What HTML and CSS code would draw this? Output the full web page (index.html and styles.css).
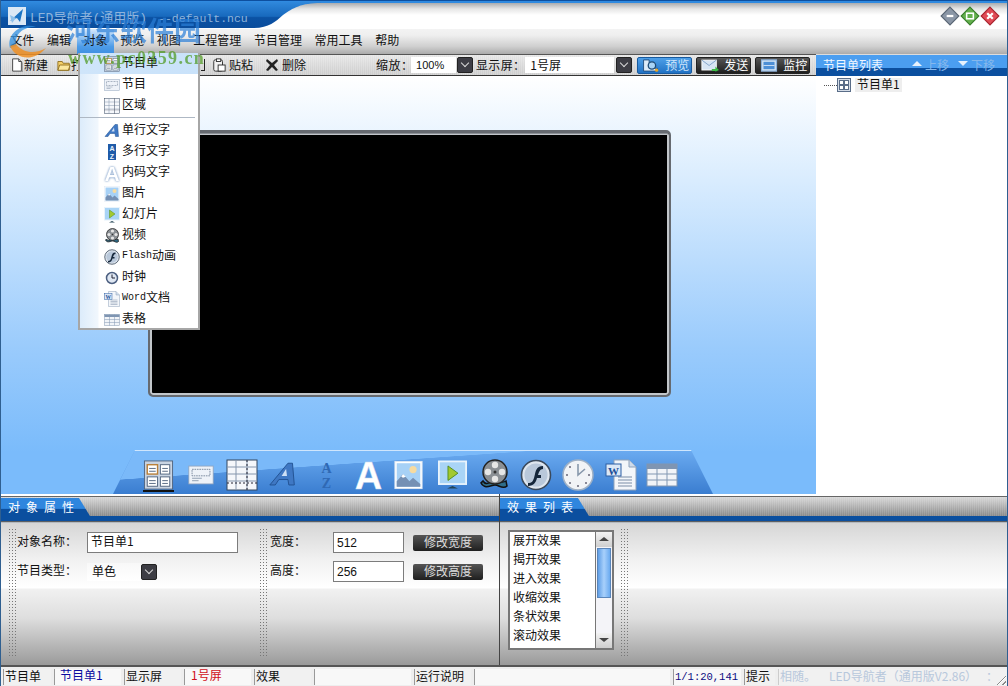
FILE: index.html
```html
<!DOCTYPE html>
<html lang="zh">
<head>
<meta charset="utf-8">
<title>LED导航者</title>
<link rel="stylesheet" href="styles.css">
</head>
<body>
<svg class="defs" width="0" height="0">
  <defs>
    <symbol id="i-grid" viewBox="0 0 32 32"><rect x="1" y="1" width="30" height="30" fill="#c9d4e2" stroke="#52657f"/><rect x="4" y="5" width="11" height="10" fill="#fff" stroke="#b9803a" stroke-width="1.5"/><rect x="18" y="5" width="10" height="10" fill="#fff" stroke="#52657f"/><rect x="4" y="18" width="11" height="10" fill="#fff" stroke="#52657f"/><rect x="18" y="18" width="10" height="10" fill="#fff" stroke="#52657f"/><path d="M6 9h7M6 12h7M20 9h6M20 12h6M6 22h7M6 25h7M20 22h6M20 25h6" stroke="#52657f"/></symbol>
    <symbol id="i-grid-s" viewBox="0 0 14 14"><rect x=".5" y=".5" width="13" height="13" fill="#d5dde8" stroke="#5a6d88"/><rect x="2.5" y="2.5" width="4" height="4" fill="#fff" stroke="#5a6d88"/><rect x="7.5" y="2.5" width="4" height="4" fill="#fff" stroke="#5a6d88"/><rect x="2.5" y="7.5" width="4" height="4" fill="#fff" stroke="#5a6d88"/><rect x="7.5" y="7.5" width="4" height="4" fill="#fff" stroke="#5a6d88"/></symbol>
    <symbol id="i-prog" viewBox="0 0 32 26"><rect x="1" y="2" width="30" height="22" fill="#eef2f8" stroke="#8ea2bc"/><rect x="5" y="6" width="22" height="8" fill="none" stroke="#66778f" stroke-dasharray="2 1"/><path d="M5 17h12M5 20h8" stroke="#8090a6"/></symbol>
    <symbol id="i-area" viewBox="0 0 32 32"><rect x="1" y="1" width="30" height="30" fill="#f5f7fb" stroke="#33465f"/><path d="M1 8h30M1 15h30M1 22h30M10 1v30M21 1v30" stroke="#8596ad"/><path d="M1 24h30M21 1v30" stroke="#223" stroke-dasharray="2 2"/></symbol>
    <symbol id="i-aslant" viewBox="0 0 32 32"><path d="M2 27L22 3h5l2 24h-6l-1-6H12l-4 6z" fill="#3f78c4" stroke="#20508f"/><path d="M15 17h6l-1-8z" fill="#cfe0f5"/></symbol>
    <symbol id="i-az" viewBox="0 0 18 32"><text x="9" y="14" text-anchor="middle" class="sym-az">A</text><text x="9" y="30" text-anchor="middle" class="sym-az">Z</text></symbol>
    <symbol id="i-az-s" viewBox="0 0 16 16"><rect x="4" y="0" width="8" height="16" fill="#1f5ba8"/><text x="8" y="7" text-anchor="middle" class="sym-azs">A</text><text x="8" y="15" text-anchor="middle" class="sym-azs">Z</text></symbol>
    <symbol id="i-a" viewBox="0 0 32 32"><text x="16" y="31" text-anchor="middle" class="sym-a">A</text></symbol>
    <symbol id="i-pic" viewBox="0 0 32 32"><rect x="1" y="1" width="30" height="30" fill="#fff" stroke="#dfe8f3"/><rect x="3" y="3" width="26" height="26" fill="#a7d1f6"/><circle cx="21" cy="10" r="4" fill="#f7dba0"/><path d="M3 29V23l7-8 7 8 4-4 8 7v3z" fill="#7590b4"/><path d="M10 15l3 3-3 1-2-1z" fill="#fff"/></symbol>
    <symbol id="i-play" viewBox="0 0 32 32"><rect x="1" y="1" width="30" height="25" fill="#a9d4f6" stroke="#e8f3fc" stroke-width="2"/><path d="M11 6l11 8-11 8z" fill="#a3c92f" stroke="#4e8a1d"/><path d="M10 31h12l-6-3z" fill="#245"/></symbol>
    <symbol id="i-film" viewBox="0 0 32 32"><path d="M3 24c4 7 10 2 14 2s8 5 12 1l-1-5c-4 3-8-1-12 0s-8 5-11 0z" fill="#2f6d8a" stroke="#111" stroke-width="1.5"/><circle cx="17" cy="13" r="12" fill="#8a8f94" stroke="#222" stroke-width="1.5"/><circle cx="17" cy="6" r="3.2" fill="#e6e6e6"/><circle cx="10" cy="13" r="3.2" fill="#e6e6e6"/><circle cx="24" cy="13" r="3.2" fill="#e6e6e6"/><circle cx="17" cy="20" r="3.2" fill="#e6e6e6"/><circle cx="17" cy="13" r="1.5" fill="#333"/></symbol>
    <symbol id="i-flash" viewBox="0 0 32 32"><circle cx="16" cy="16" r="14.5" fill="#dfe6ee" stroke="#3b4a5c" stroke-width="1.6"/><circle cx="16" cy="16" r="11.5" fill="#b9c8da"/><path d="M23 7c-6 0-7 4-8 8l-1 4c-1 3-2 5-6 5v3c6 0 8-4 9-8h4v-3h-3c1-3 2-6 5-6z" fill="#15263a"/></symbol>
    <symbol id="i-clock" viewBox="0 0 32 32"><circle cx="16" cy="16" r="15" fill="#f1f3f6" stroke="#9fb1c6" stroke-width="1.5"/><path d="M16 5v11l7-6" fill="none" stroke="#8898ac" stroke-width="1.6"/><circle cx="16" cy="27" r="1" fill="#667"/><circle cx="5" cy="16" r="1" fill="#667"/><circle cx="27" cy="16" r="1" fill="#667"/><circle cx="8" cy="8" r="1" fill="#667"/><circle cx="8" cy="24" r="1" fill="#667"/><circle cx="24" cy="24" r="1" fill="#667"/></symbol>
    <symbol id="i-clock-s" viewBox="0 0 16 16"><circle cx="8" cy="8" r="5.5" fill="#dfe7f2" stroke="#4c5f80" stroke-width="1.5"/><path d="M8 4.5V8h3" fill="none" stroke="#223"/></symbol>
    <symbol id="i-word" viewBox="0 0 32 32"><path d="M9 1h15l7 7v23H9z" fill="#f3f6fa" stroke="#8fa2ba"/><path d="M24 1v7h7" fill="#cfdbea" stroke="#8fa2ba"/><path d="M13 18h14M13 21h14M13 24h14M13 27h14" stroke="#7a8da6"/><rect x="1" y="5" width="15" height="12" fill="#dce8f6" stroke="#2c5ea3"/><text x="8.5" y="15.5" text-anchor="middle" class="sym-w">W</text></symbol>
    <symbol id="i-table" viewBox="0 0 32 24"><rect x="1" y="1" width="30" height="22" fill="#f1f4f8" stroke="#8197b2"/><rect x="1" y="1" width="30" height="5" fill="#7f95b2"/><path d="M1 11h30M1 17h30M11 1v22M21 1v22" stroke="#8197b2"/></symbol>
    <symbol id="i-doc" viewBox="0 0 14 16"><path d="M2 1h7l3 3v11H2z" fill="#fff" stroke="#333"/><path d="M9 1v3h3" fill="#ddd" stroke="#333"/><path d="M13 5v11H4" fill="none" stroke="#888"/></symbol>
    <symbol id="i-folder" viewBox="0 0 16 14"><path d="M1 3h5l1 2h7v8H1z" fill="#f5cf68" stroke="#8b6a1d"/><path d="M3 7h12l-2 6H1z" fill="#fbe79e" stroke="#8b6a1d"/></symbol>
    <symbol id="i-paste" viewBox="0 0 16 16"><rect x="2" y="2" width="10" height="13" rx="2" fill="#f2f2f2" stroke="#222"/><rect x="5" y="1" width="5" height="3" fill="#fff" stroke="#222"/><rect x="7" y="8" width="8" height="7" fill="#fff" stroke="#222"/></symbol>
    <symbol id="i-x" viewBox="0 0 14 14"><path d="M2 1l5 4 5-4 1 2-4 4 4 5-2 1-4-4-4 4-2-1 4-5-4-4z" fill="#222"/></symbol>
    <symbol id="i-preview" viewBox="0 0 18 14"><path d="M1 1h6v9h9v3H1z" fill="#dcebf9" stroke="#23507f"/><circle cx="10" cy="7" r="4" fill="#a8d3f5" stroke="#1f4b76" stroke-width="1.4"/><circle cx="15" cy="12" r="1.8" fill="#eaa82b"/></symbol>
    <symbol id="i-mail" viewBox="0 0 20 14"><rect x="1" y="1" width="16" height="11" fill="#d7e5f5" stroke="#fff"/><path d="M1 1l8 6 8-6" fill="none" stroke="#7ea0c8"/><path d="M12 11h4V8l4 4-4 2v-1h-4z" fill="#3dbb46"/></symbol>
    <symbol id="i-monitor" viewBox="0 0 18 14"><rect x="1" y="1" width="16" height="12" fill="#dce9f7" stroke="#8eb2da" stroke-width="1.4"/><rect x="3" y="3" width="12" height="8" fill="#4d8fd6"/><path d="M3 7h12" stroke="#cfe1f5"/></symbol>
  </defs>
</svg>

<div class="window">
  <header class="titlebar">
    <svg class="title-shape" width="320" height="29" viewBox="0 0 320 29" preserveAspectRatio="none">
      <defs>
        <linearGradient id="tabfill" x1="0" y1="0" x2="0" y2="1"><stop offset="0" stop-color="#2f88dc"/><stop offset=".55" stop-color="#1869bd"/><stop offset=".6" stop-color="#0b52a4"/><stop offset="1" stop-color="#0a4d9c"/></linearGradient>
      </defs>
      <path d="M0 2H320V3C300 3 292 8 282 15 274 22 268 28 252 28H0z" fill="url(#tabfill)"/>
    </svg>
    <span class="app-logo"><svg width="18" height="18" viewBox="0 0 18 18"><rect width="18" height="18" fill="#dbe8f5"/><path d="M2 14L15 2l-3 13-3-4z" fill="#1c74c4"/><path d="M2 8l6 3-4 5z" fill="#8ec0ea"/></svg></span>
    <span class="title-text">LED导航者(通用版)<span class="title-file">--default.ncu</span></span>
    <div class="win-controls">
      <svg class="win-btn" viewBox="0 0 18 18"><path d="M9 1l8 8-8 8-8-8z" fill="#8a96a6" stroke="#5a6675"/><path d="M6 9h6" stroke="#fff" stroke-width="2"/></svg>
      <svg class="win-btn" viewBox="0 0 18 18"><path d="M9 1l8 8-8 8-8-8z" fill="#64b04e" stroke="#3a7f2c"/><rect x="6" y="6.5" width="6" height="5" fill="none" stroke="#fff" stroke-width="1.4"/></svg>
      <svg class="win-btn" viewBox="0 0 18 18"><path d="M9 1l8 8-8 8-8-8z" fill="#e04a55" stroke="#a82530"/><path d="M6.5 6.5l5 5M11.5 6.5l-5 5" stroke="#fff" stroke-width="2"/></svg>
    </div>
  </header>

  <nav class="menubar">
    <span class="menu-item">文件</span>
    <span class="menu-item">编辑</span>
    <span class="menu-item active">对象</span>
    <span class="menu-item">预览</span>
    <span class="menu-item">视图</span>
    <span class="menu-item">工程管理</span>
    <span class="menu-item">节目管理</span>
    <span class="menu-item">常用工具</span>
    <span class="menu-item">帮助</span>
  </nav>

  <div class="toolrow">
    <div class="toolbar">
      <div class="tool-hidden">
        <span class="tool"><svg class="ico14"><use href="#i-doc"/></svg>新建</span>
        <span class="tool"><svg class="ico14"><use href="#i-folder"/></svg>打开</span>
        <span class="tool-tail"></span>
      </div>
      <span class="tool wide"><svg class="ico14"><use href="#i-paste"/></svg>贴粘</span>
      <span class="tool wide"><svg class="ico14"><use href="#i-x"/></svg>删除</span>
      <span class="tool-label zoom-label">缩放：</span>
      <span class="fake-input w-zoom">100%</span>
      <span class="arrow-btn"></span>
      <span class="tool-label">显示屏：</span>
      <span class="fake-input w-screen">1号屏</span>
      <span class="arrow-btn"></span>
      <span class="act-btn first"><svg class="ico-btn"><use href="#i-preview"/></svg>预览</span>
      <span class="act-btn dark"><svg class="ico-btn"><use href="#i-mail"/></svg>发送</span>
      <span class="act-btn dark"><svg class="ico-btn"><use href="#i-monitor"/></svg>监控</span>
    </div>
    <div class="list-head">
      <span class="list-title">节目单列表</span>
      <span class="list-act up">上移</span>
      <span class="list-act down">下移</span>
    </div>
  </div>

  <main class="workspace">
    <section class="stage">
      <div class="screen"></div>
      <div class="dock">
        <svg class="dock-i sel"><use href="#i-grid"/></svg>
        <svg class="dock-i w26"><use href="#i-prog"/></svg>
        <svg class="dock-i w32"><use href="#i-area"/></svg>
        <svg class="dock-i"><use href="#i-aslant"/></svg>
        <svg class="dock-i w18"><use href="#i-az"/></svg>
        <svg class="dock-i"><use href="#i-a"/></svg>
        <svg class="dock-i"><use href="#i-pic"/></svg>
        <svg class="dock-i"><use href="#i-play"/></svg>
        <svg class="dock-i w32"><use href="#i-film"/></svg>
        <svg class="dock-i w32"><use href="#i-flash"/></svg>
        <svg class="dock-i w32"><use href="#i-clock"/></svg>
        <svg class="dock-i w32"><use href="#i-word"/></svg>
        <svg class="dock-i w32"><use href="#i-table"/></svg>
      </div>
    </section>
    <aside class="tree">
      <div class="tree-row">
        <span class="tree-dots"></span>
        <svg class="ico14"><use href="#i-grid-s"/></svg>
        <span class="tree-label">节目单1</span>
      </div>
    </aside>
  </main>

  <section class="panels">
    <div class="panel left">
      <div class="panel-head"><span class="panel-tab">对象属性</span></div>
      <div class="panel-body form-body">
        <span class="grip"></span>
        <div class="form-col name-col">
          <div class="form-row"><span class="form-label">对象名称：</span><span class="field name-field">节目单1</span></div>
          <div class="form-row"><span class="form-label">节目类型：</span><span class="plain-select">单色</span><span class="arrow-btn"></span></div>
        </div>
        <span class="grip"></span>
        <div class="form-col size-col">
          <div class="form-row"><span class="form-label short">宽度：</span><span class="field num-field">512</span><span class="dark-btn">修改宽度</span></div>
          <div class="form-row"><span class="form-label short">高度：</span><span class="field num-field">256</span><span class="dark-btn">修改高度</span></div>
        </div>
      </div>
    </div>
    <div class="panel right">
      <div class="panel-head"><span class="panel-tab">效果列表</span></div>
      <div class="panel-body effect-body">
        <div class="listbox">
          <ul class="list-items">
            <li>展开效果</li><li>揭开效果</li><li>进入效果</li><li>收缩效果</li><li>条状效果</li><li>滚动效果</li><li>特殊效果</li>
          </ul>
          <div class="scroll">
            <span class="scroll-btn up"></span>
            <span class="scroll-thumb"></span>
            <span class="scroll-btn down"></span>
          </div>
        </div>
        <span class="grip"></span>
      </div>
    </div>
  </section>

  <footer class="status">
    <span class="cell">节目单</span>
    <span class="cell val blue">节目单1</span>
    <span class="cell">显示屏</span>
    <span class="cell val red">1号屏</span>
    <span class="cell">效果</span>
    <span class="cell val"></span>
    <span class="cell">运行说明</span>
    <span class="cell val"></span>
    <span class="cell val coord">1/1:20,141</span>
    <span class="cell">提示</span>
    <span class="cell marquee"><span class="mq-a">相随。</span><span class="mq-b">LED导航者（通用版V2.86）</span><span class="mq-c">：</span></span>
    <span class="resize-grip"></span>
  </footer>

  <div class="dropdown">
    <div class="dd-item hot"><svg class="dd-ico"><use href="#i-grid"/></svg>节目单</div>
    <div class="dd-item"><svg class="dd-ico"><use href="#i-prog"/></svg>节目</div>
    <div class="dd-item"><svg class="dd-ico"><use href="#i-area"/></svg>区域</div>
    <div class="dd-sep"></div>
    <div class="dd-item"><svg class="dd-ico"><use href="#i-aslant"/></svg>单行文字</div>
    <div class="dd-item"><svg class="dd-ico"><use href="#i-az-s"/></svg>多行文字</div>
    <div class="dd-item"><svg class="dd-ico pale"><use href="#i-a"/></svg>内码文字</div>
    <div class="dd-item"><svg class="dd-ico"><use href="#i-pic"/></svg>图片</div>
    <div class="dd-item"><svg class="dd-ico"><use href="#i-play"/></svg>幻灯片</div>
    <div class="dd-item"><svg class="dd-ico"><use href="#i-film"/></svg>视频</div>
    <div class="dd-item"><svg class="dd-ico"><use href="#i-flash"/></svg><span class="latin">Flash</span>动画</div>
    <div class="dd-item"><svg class="dd-ico"><use href="#i-clock-s"/></svg>时钟</div>
    <div class="dd-item"><svg class="dd-ico"><use href="#i-word"/></svg><span class="latin">Word</span>文档</div>
    <div class="dd-item"><svg class="dd-ico"><use href="#i-table"/></svg>表格</div>
  </div>

  <div class="watermark">
    <svg class="wm-logo" width="48" height="40" viewBox="0 0 48 40"><path d="M6 26C2 12 18 0 32 5 20 4 10 12 12 24z" fill="#2f8fe0" opacity=".75"/><path d="M6 24c6 14 24 16 36 2-10 6-22 6-30-4z" fill="#ef8f25" opacity=".85"/></svg>
    <span class="wm-cn">河东软件园</span>
    <span class="wm-url">www.pc0359.cn</span>
  </div>
</div>
</body>
</html>
```
FILE: styles.css
```css
* { box-sizing: border-box; }
html, body { margin: 0; padding: 0; }
body {
  width: 1008px;
  height: 686px;
  overflow: hidden;
  font: 12px/1 "Noto Sans CJK SC", "Liberation Sans", sans-serif;
  color: #111;
}
.defs { position: absolute; }
.sym-az { font: bold 15px "Liberation Serif", serif; fill: #2f69b4; }
.sym-azs { font: bold 7px "Liberation Sans", sans-serif; fill: #e8f2fc; }
.sym-a { font: bold 42px "Liberation Sans", sans-serif; fill: #fff; stroke: #c8d8ee; stroke-width: .4px; }
.sym-w { font: bold 11px "Liberation Serif", serif; fill: #1d4f98; }

.window {
  position: relative;
  width: 1008px;
  height: 686px;
  display: flex;
  flex-direction: column;
  background: #fff;
  border-left: 1px solid #2f5f90;
  border-right: 1px solid #2f5f90;
  overflow: hidden;
}

/* title */
.titlebar {
  position: relative;
  height: 29px;
  flex: none;
  display: flex;
  align-items: center;
  padding: 3px 7px 0 7px;
  background: linear-gradient(#0d4f9f 0, #0d4f9f 1px, #2f8ae0 1px, #2f8ae0 3px, #a9abae 3px, #e6e6e6 9px, #fff 15px);
}
.title-shape { position: absolute; left: 0; top: 0; }
.app-logo { position: relative; width: 18px; height: 18px; margin-right: 4px; }
.title-text {
  position: relative;
  font: 13px "Liberation Mono", "Noto Sans CJK SC", monospace;
  color: #8fb4dc;
  white-space: nowrap;
}
.title-file { margin-left: 11px; font-size: 11.5px; }
.win-controls { margin-left: auto; display: flex; position: relative; }
.win-btn { width: 20px; height: 20px; }

/* menu */
.menubar {
  height: 25px;
  flex: none;
  display: flex;
  align-items: stretch;
  padding-left: 3px;
  background: linear-gradient(#f3f3f3 0, #efefef 25%, #cfcfcf 70%, #ababab 100%);
}
.menu-item { display: flex; align-items: center; padding: 0 6.3px 3px; white-space: nowrap; color: #111; }
.menu-item.active { background: linear-gradient(#d8e9fb, #4d9ce8 70%, #3e8fe0); }

/* toolbar row */
.toolrow { height: 22px; flex: none; display: flex; }
.toolbar {
  width: 815px;
  display: flex;
  align-items: center;
  padding-left: 9px;
  border-top: 1px solid #555;
  border-bottom: 1px solid #333;
  background:
    repeating-linear-gradient(90deg, rgba(255,255,255,.18) 0 1px, transparent 1px 2px),
    linear-gradient(#e6e6e6, #cdcdcd);
}
.tool-hidden { width: 202px; display: flex; align-items: center; }
.tool { display: flex; align-items: center; margin-right: 9px; white-space: nowrap; }
.tool.wide { gap: 3px; margin-right: 12px; }
.tool-tail {
  width: 4px;
  height: 12px;
  margin-left: auto;
  margin-right: 7px;
  border-right: 1px solid #222;
  border-bottom: 1px solid #222;
}
.ico14 { width: 14px; height: 14px; flex: none; }
.tool-label { white-space: nowrap; letter-spacing: .3px; }
.zoom-label { margin-left: 58px; width: 35px; letter-spacing: .5px; }
.fake-input {
  height: 16px;
  display: flex;
  align-items: center;
  padding-left: 5px;
  background: #fff;
  font-size: 11px;
}
.w-zoom { width: 45px; margin-right: 1px; font-family: "Liberation Sans", sans-serif; }
.w-screen { width: 89px; margin-right: 2px; font-size: 12px; }
.arrow-btn {
  position: relative;
  width: 16px;
  height: 16px;
  flex: none;
  border-radius: 2px;
  background: #3d3d44;
  border: 1px solid #222;
  margin-right: 3px;
}
.arrow-btn::after {
  content: "";
  position: absolute;
  left: 4px;
  top: 2px;
  width: 5px;
  height: 5px;
  border-right: 1.5px solid #d8d8d8;
  border-bottom: 1.5px solid #d8d8d8;
  transform: rotate(45deg);
}
.act-btn {
  height: 17px;
  display: flex;
  align-items: center;
  gap: 5px;
  padding: 0 4px;
  margin-left: 4px;
  border-radius: 2px;
  color: #fff;
  white-space: nowrap;
}
.act-btn.first { width: 55px; margin-left: 2px; color: #cfe6fb; background: linear-gradient(#4d9fe8, #2272c4); border: 1px solid #185a9e; }
.act-btn.dark { width: 55px; background: linear-gradient(#555, #1f1f1f); border: 1px solid #222; }
.ico-btn { width: 18px; height: 13px; flex: none; }

.list-head {
  flex: 1;
  display: flex;
  align-items: center;
  padding-left: 7px;
  color: #f0f6ff;
  background: linear-gradient(#dcdcdc 0, #dcdcdc 1px, #4b9ef0 1px, #4b9ef0 14px, #0b4f9f 14px, #0b4f9f 100%);
}
.list-title { width: 89px; }
.list-act { position: relative; color: #86b8ec; padding-left: 13px; width: 46px; }
.list-act::before {
  content: "";
  position: absolute;
  left: 0;
  top: 2px;
  border-left: 5px solid transparent;
  border-right: 5px solid transparent;
}
.list-act.up::before { border-bottom: 5px solid #e8f2fc; }
.list-act.down::before { border-top: 5px solid #e8f2fc; }

/* workspace */
.workspace { height: 418px; flex: none; display: flex; }
.stage {
  width: 815px;
  display: flex;
  flex-direction: column;
  padding-top: 54px;
  background: linear-gradient(#fff 0, #d9ecfe 25%, #9acbfc 65%, #7abbfb 90%, #7abbfb 100%);
}
.screen {
  width: 523px;
  height: 267px;
  flex: none;
  margin-left: 147px;
  background: #000;
  border-style: solid;
  border-color: #666a70;
  border-width: 3px 2px 2px;
  border-radius: 5px;
  box-shadow: inset 0 1px 0 #8c9096, inset 0 0 0 2px #c2c6ca;
}
.dock {
  width: 600px;
  height: 44px;
  margin: auto 0 0 112px;
  padding: 4px 0 0 30px;
  display: grid;
  grid-template-columns: 45px 38px 42px 50px 36px 40px 44px 40px 42px 42px 43px 41px 31px;
  align-items: center;
  justify-items: start;
  clip-path: polygon(22px 0, 578px 0, 600px 100%, 0 100%);
  border-top: 1px solid #cfe6fd;
  background:
    linear-gradient(176deg, #7ab9f9 0, #7ab9f9 34%, transparent 34.6%),
    linear-gradient(#6aaaf0, #3a7dd0);
}
.dock-i { width: 29px; height: 30px; }
.dock-i.sel { width: 31px; height: 30px; box-shadow: 0 2px 0 #111; }
.dock-i.w26 { width: 26px; height: 22px; }
.dock-i.w32 { width: 32px; height: 32px; }
.dock-i.w18 { width: 17px; height: 30px; }

.tree { flex: 1; padding: 1px 0 0 8px; background: #fff; }
.tree-row { display: flex; align-items: center; height: 16px; }
.tree-dots { width: 13px; border-top: 1px dotted #555; }
.tree-label { margin-left: 4px; padding: 0 2px 2px; background: #eee; }

/* panels */
.panels { height: 171px; flex: none; display: flex; background: #fff; }
.panel { display: flex; flex-direction: column; }
.panel.left { width: 499px; border-right: 1px solid #444; }
.panel.right { flex: 1; }
.panel-head {
  height: 29px;
  flex: none;
  padding-top: 4px;
  display: flex;
  background:
    linear-gradient(#fff 0, #fff 2px, #666 2px, #666 3px, transparent 3px),
    linear-gradient(transparent 0, transparent 22px, #0b4f9f 22px, #0b4f9f 27px, #333 27px, #dfe6ee 29px),
    repeating-linear-gradient(90deg, rgba(255,255,255,.12) 0 1px, transparent 1px 2px),
    linear-gradient(#d8d8d8 3px, #8a8a8a 22px);
}
.panel-tab {
  width: 92px;
  height: 23px;
  padding: 3px 0 0 7px;
  color: #fff;
  letter-spacing: 6px;
  white-space: nowrap;
  clip-path: polygon(0 0, 78px 0, 92px 100%, 0 100%);
  background: linear-gradient(#2f86de 0, #2f86de 45%, #0b4f9f 50%, #0b4f9f 100%);
}
.panel-body {
  flex: 1;
  display: flex;
  background: linear-gradient(#d6d6d6 0, #f0f0f0 35px, #fff 65px, #f1f1f1 66px, #dedede 95px, #9a9a9a 100%);
}
.form-body { padding: 5px 0 9px 7px; }
.grip {
  width: 8px;
  flex: none;
  background-image: radial-gradient(circle, #777 .6px, transparent .8px);
  background-size: 3px 3px;
}
.form-col { display: flex; flex-direction: column; gap: 8px; padding: 4px 0 0 1px; }
.name-col { width: 243px; }
.size-col { padding-left: 3px; }
.form-row { display: flex; align-items: center; height: 21px; }
.form-label { width: 70px; padding-bottom: 3px; white-space: nowrap; }
.form-label.short { width: 63px; }
.field {
  height: 21px;
  display: flex;
  align-items: center;
  padding: 0 0 3px 3px;
  background: #fff;
  border: 1px solid #7c7c7c;
}
.name-field { width: 151px; }
.num-field { width: 71px; padding-bottom: 0; font-family: "Liberation Sans", sans-serif; }
.plain-select {
  width: 54px;
  height: 18px;
  display: flex;
  align-items: center;
  padding: 0 0 2px 5px;
  background: linear-gradient(#f8f8f8, #fff);
}
.dark-btn {
  width: 70px;
  height: 16px;
  margin-left: 9px;
  display: flex;
  align-items: center;
  justify-content: center;
  padding-bottom: 1px;
  color: #ddd;
  border-radius: 2px;
  background: linear-gradient(#555, #1f1f1f);
}
.effect-body { padding: 5px 0 9px 8px; gap: 6px; }
.listbox {
  width: 106px;
  height: 120px;
  margin-top: 2px;
  display: flex;
  background: #fff;
  border: 2px solid #777;
  overflow: hidden;
}
.list-items { flex: 1; margin: 0; padding: 0 0 0 3px; list-style: none; }
.list-items li { height: 19px; display: flex; align-items: center; padding-bottom: 3px; white-space: nowrap; }
.scroll {
  width: 17px;
  flex: none;
  display: flex;
  flex-direction: column;
  background: #f4f4f8;
  border-left: 1px solid #777;
}
.scroll-btn {
  position: relative;
  height: 15px;
  flex: none;
  background: linear-gradient(#f2f2f2, #cfcfcf);
}
.scroll-btn::after {
  content: "";
  position: absolute;
  left: 3px;
  top: 5px;
  border-left: 5px solid transparent;
  border-right: 5px solid transparent;
}
.scroll-btn.up::after { border-bottom: 4px solid #444; }
.scroll-btn.down { margin-top: auto; }
.scroll-btn.down::after { border-top: 4px solid #444; }
.scroll-thumb { height: 50px; margin: 1px 1px 0; background: linear-gradient(90deg, #5f9ee6, #a8d0fb 50%, #6aaaf0); border: 1px solid #5a86bb; }

/* status */
.status {
  position: relative;
  flex: 1;
  display: grid;
  grid-template-columns: 48px 67px 57px 67px 57px 97px 57px 196px 68px 31px 1fr;
  column-gap: 3px;
  padding: 2px 0 1px 2px;
  border-top: 2px solid #555;
  background: #eee;
}
.cell {
  display: flex;
  align-items: center;
  padding: 0 0 3px 1px;
  white-space: nowrap;
  border-left: 1px solid #999;
  background: #f1f1f1;
}
.cell.val { background: #f8f8f8; padding: 0 0 4px 5px; }
.cell.red { padding-left: 6px; }
.cell.blue { color: #0a0aa0; }
.cell.red { color: #d0101a; }
.cell.coord { color: #0a0a80; font: 10.5px "Liberation Mono", monospace; padding: 0 0 0 1px; }
.marquee { color: #b8c8dc; padding-left: 1px; border-left: 1px solid #ccc; }
.mq-a { width: 49px; }
.mq-b { width: 157px; }
.resize-grip {
  position: absolute;
  right: 1px;
  bottom: 1px;
  width: 12px;
  height: 12px;
  background: repeating-linear-gradient(135deg, transparent 0 2px, #8a8a8a 2px 3px, #fff 3px 4px);
  clip-path: polygon(100% 0, 100% 100%, 0 100%);
}

/* dropdown */
.dropdown {
  position: absolute;
  left: 77px;
  top: 53px;
  width: 122px;
  height: 277px;
  padding: 0 0 1px;
  background: linear-gradient(90deg, #dcecfb 0, #f1f7fd 18px, #fff 19px);
  border: 2px solid #a6a6a6;
  border-top: 0;
}
.dd-item { height: 21px; display: flex; align-items: center; padding: 0 0 3px 24px; gap: 2px; white-space: nowrap; }
.dd-item.hot { background: linear-gradient(90deg, #cfe5fa, #c9e2fa); }
.dd-ico { width: 16px; height: 16px; flex: none; margin-bottom: -3px; }
.pale { filter: drop-shadow(0 0 1px #5f86b8); }
.dd-sep { height: 3px; margin: 1px 3px 0 0; border-top: 1px solid #aeb8c4; }
.latin { font: 10px "Liberation Mono", monospace; margin-right: -2px; }

/* watermark */
.watermark { position: absolute; left: 0; top: 0; width: 210px; height: 70px; pointer-events: none; }
.wm-logo { position: absolute; left: 3px; top: 22px; }
.wm-cn {
  position: absolute;
  left: 65px;
  top: 10px;
  font: bold 27px "Noto Sans CJK SC", sans-serif;
  color: #2a7fd8;
  opacity: .7;
  white-space: nowrap;
}
.wm-url {
  position: absolute;
  left: 67px;
  top: 48px;
  font: bold 18px "Liberation Serif", serif;
  letter-spacing: 1.4px;
  color: #4f9a22;
  opacity: .72;
  white-space: nowrap;
}
```
